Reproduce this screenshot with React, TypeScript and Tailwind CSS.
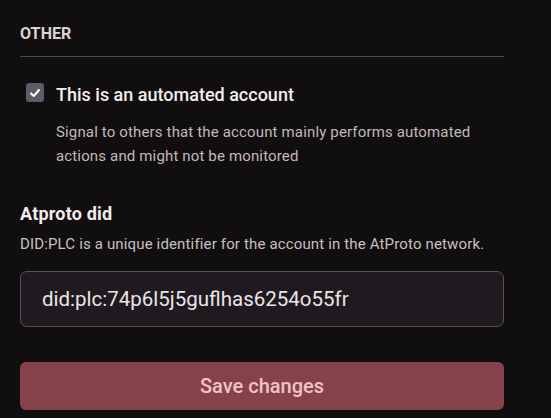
import React from "react";

export default function App() {
  return (
    <div
      className="w-[551px] h-[418px] bg-[#110e10] overflow-hidden"
      style={{ fontFamily: "Roboto, 'Liberation Sans', sans-serif" }}
    >
      <div className="ml-5 w-[484px] pt-[22px]">
        <div className="text-[16px] leading-6 font-bold text-[#ddd2d2] tracking-[0.1px]">OTHER</div>
        <div className="mt-[10px] h-px bg-[#4f4a4d]" />

        <div className="mt-[24px] flex items-start">
          <div className="ml-[6px] mt-[2px] w-[18px] h-[19px] rounded-[3px] bg-[#5e5a66] flex items-center justify-center">
            <svg width="12" height="12" viewBox="0 0 12 12" fill="none">
              <path d="M2 6.4 L4.8 9 L10 3" stroke="#ffffff" strokeWidth="2" strokeLinecap="round" strokeLinejoin="round" />
            </svg>
          </div>
          <div className="ml-[12px] text-[18px] leading-7 font-medium text-[#f3eded]">This is an automated account</div>
        </div>
        <div className="ml-[36px] mt-[11px] text-[15px] leading-6 tracking-[0.15px] text-[#c2b9b9]">
          Signal to others that the account mainly performs automated
          <br />
          actions and might not be monitored
        </div>

        <div className="mt-[32px] text-[18px] leading-7 font-bold tracking-[0.2px] text-[#f3eded]">Atproto did</div>
        <div className="mt-[4px] text-[15px] leading-6 tracking-[0.15px] text-[#c8c0c0]">
          DID:PLC is a unique identifier for the account in the AtProto network.
        </div>

        <div className="mt-[15px] h-[56px] rounded-[7px] border border-[#57525a] bg-[#1e1a1f] flex items-center pl-[21px] text-[20.5px] text-[#ece5e5]">
          did:plc:74p6l5j5guflhas6254o55fr
        </div>

        <div className="mt-[35px] h-[48px] rounded-[6px] bg-[#86424a] flex items-center justify-center text-[20px] font-medium text-[#f2c4c0]">
          Save changes
        </div>
      </div>
    </div>
  );
}
